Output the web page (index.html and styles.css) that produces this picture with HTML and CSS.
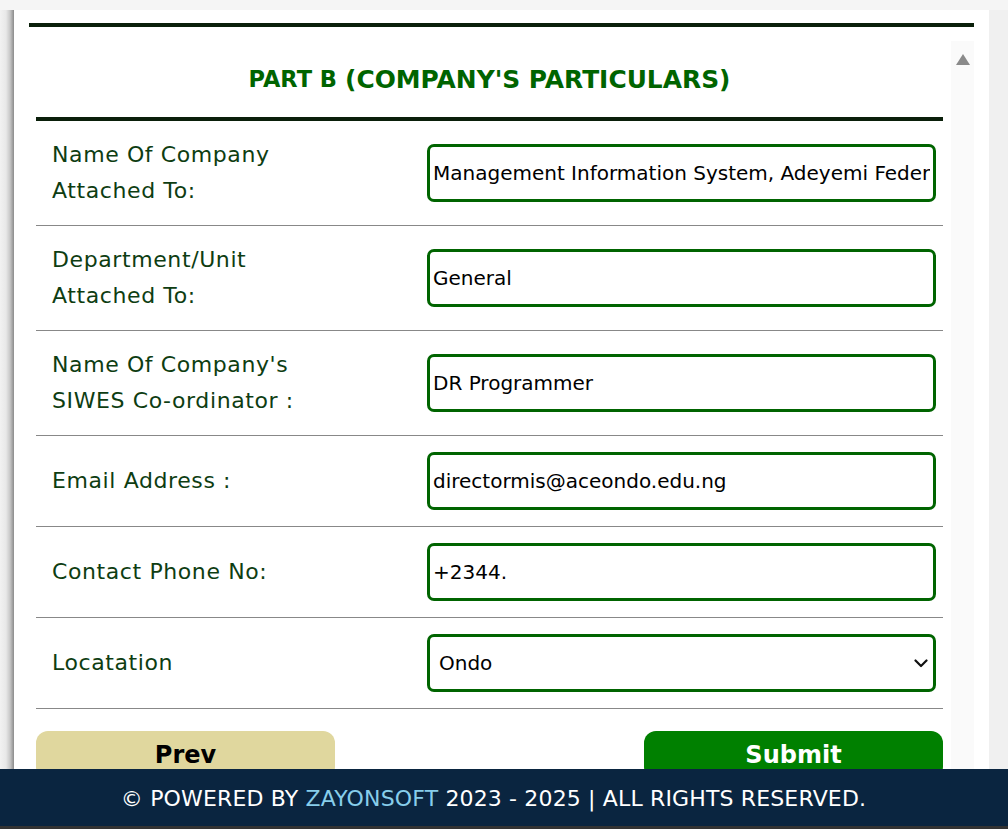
FILE: index.html
```html
<!DOCTYPE html>
<html lang="en">
<head>
<meta charset="utf-8">
<title>Part B - Company's Particulars</title>
<link rel="stylesheet" href="styles.css">
</head>
<body>
<div class="page">
  <div class="edge"></div>
  <div class="panel">
    <div class="top-rule"></div>
    <div class="scroller">
      <div class="content">
        <h3 class="title"><span class="title-small">PART B</span> <span class="title-big">(COMPANY'S PARTICULARS)</span></h3>
        <div class="form">
          <div class="row">
            <label class="label" for="f1">Name Of Company<br>Attached To:</label>
            <input class="field" id="f1" type="text" value="Management Information System, Adeyemi Federal University of Education, Ondo">
          </div>
          <div class="row">
            <label class="label" for="f2">Department/Unit<br>Attached To:</label>
            <input class="field" id="f2" type="text" value="General">
          </div>
          <div class="row">
            <label class="label" for="f3">Name Of Company's<br>SIWES Co-ordinator :</label>
            <input class="field" id="f3" type="text" value="DR Programmer">
          </div>
          <div class="row">
            <label class="label" for="f4">Email Address :</label>
            <input class="field" id="f4" type="text" value="directormis@aceondo.edu.ng">
          </div>
          <div class="row">
            <label class="label" for="f5">Contact Phone No:</label>
            <input class="field" id="f5" type="text" value="+2344.">
          </div>
          <div class="row">
            <label class="label" for="f6">Locatation</label>
            <div class="select-wrap">
              <select class="field select" id="f6">
                <option>Ondo</option>
                <option>Akure</option>
                <option>Lagos</option>
              </select>
              <svg class="chevron" width="14" height="9" viewBox="0 0 14 9" aria-hidden="true">
                <path d="M1.5 1.5 L7 7 L12.5 1.5" fill="none" stroke="#111" stroke-width="2.2" stroke-linecap="round" stroke-linejoin="round"/>
              </svg>
            </div>
          </div>
        </div>
        <div class="actions">
          <button class="btn btn-prev" type="button">Prev</button>
          <button class="btn btn-submit" type="button">Submit</button>
        </div>
      </div>
      <div class="scrollbar">
        <div class="arrow-up"></div>
      </div>
    </div>
  </div>
  <div class="gutter"></div>
</div>
<footer class="footer">
  <p class="footer-text">&copy; POWERED BY <span class="brand">ZAYONSOFT</span> 2023 - 2025 | ALL RIGHTS RESERVED.</p>
</footer>
</body>
</html>
```
FILE: styles.css
```css
html, body {
  margin: 0;
  padding: 0;
  height: 100%;
  overflow: hidden;
}

body {
  background: #f5f5f5;
  font-family: "DejaVu Sans", Verdana, sans-serif;
}

.page {
  display: flex;
  padding-top: 10px;
  height: 100%;
  box-sizing: border-box;
}

.edge {
  width: 14px;
  flex: none;
  background: linear-gradient(to right, #f2f2f2 0px, #e8e8e8 6px, #c8c8c8 10px, #9a9a9a 13px, #8c8c8c 14px);
}

.panel {
  flex: 1;
  background: #ffffff;
  padding: 13px 15px 0 15px;
  display: flex;
  flex-direction: column;
}

.top-rule {
  height: 4px;
  background: #0a1f0a;
}

.scroller {
  margin-top: 14px;
  display: flex;
  flex: 1;
  min-height: 0;
}

.content {
  flex: 1;
  padding-left: 7px;
  padding-right: 8px;
}

.scrollbar {
  width: 23px;
  flex: none;
  background: #fafafa;
  display: flex;
  justify-content: center;
}

.arrow-up {
  margin-top: 13px;
  width: 0;
  height: 0;
  border-left: 7px solid transparent;
  border-right: 7px solid transparent;
  border-bottom: 11px solid #8a8a8a;
}

.title {
  margin: 0;
  height: 80px;
  display: flex;
  align-items: center;
  justify-content: center;
  gap: 8px;
  color: #006400;
  font-weight: bold;
  font-family: "DejaVu Sans", Verdana, sans-serif;
  border-bottom: 4px solid #0a1f0a;
  box-sizing: border-box;
  padding-top: 0;
}

.title-small {
  font-size: 22.5px;
}

.title-big {
  font-size: 24.9px;
}

.form {
  display: flex;
  flex-direction: column;
}

.row {
  display: grid;
  grid-template-columns: 391px 509px;
  align-items: center;
  padding: 16px 0;
  border-bottom: 1px solid #888888;
}

.label {
  padding-left: 16px;
  font-family: "DejaVu Sans", sans-serif;
  font-size: 22px;
  line-height: 36px;
  letter-spacing: 0.6px;
  color: #0e3d12;
}

.field {
  box-sizing: border-box;
  height: 58px;
  width: 509px;
  border: 3px solid #006400;
  border-radius: 7px;
  padding: 0 3px;
  font-family: "DejaVu Sans", Verdana, sans-serif;
  font-size: 20px;
  color: #000000;
  background: #ffffff;
  outline: none;
}

.select-wrap {
  position: relative;
  width: 509px;
  height: 58px;
}

.select {
  appearance: none;
  -webkit-appearance: none;
  padding-left: 9px;
  padding-right: 30px;
}

.chevron {
  position: absolute;
  right: 8px;
  top: 25px;
  pointer-events: none;
}

.actions {
  display: flex;
  justify-content: space-between;
  margin-top: 22px;
}

.btn {
  width: 299px;
  height: 48px;
  border: none;
  border-radius: 12px;
  font-family: "DejaVu Sans", Verdana, sans-serif;
  font-weight: bold;
  font-size: 24px;
  padding: 0;
}

.btn-prev {
  background: #e0d79e;
  color: #000000;
}

.btn-submit {
  background: #008000;
  color: #ffffff;
}

.gutter {
  width: 19px;
  flex: none;
  background: #f0f0f0;
}

.footer {
  position: fixed;
  left: 0;
  right: 0;
  bottom: 0;
  height: 57px;
  padding-right: 21px;
  border-bottom: 3px solid #333333;
  background: #0a2540;
  display: flex;
  align-items: center;
  justify-content: center;
}

.footer-text {
  margin: 0;
  padding-top: 2px;
  color: #ffffff;
  font-family: "DejaVu Sans", sans-serif;
  font-size: 22px;
  letter-spacing: 0.15px;
  white-space: nowrap;
}

.brand {
  color: #87ceeb;
}
```
